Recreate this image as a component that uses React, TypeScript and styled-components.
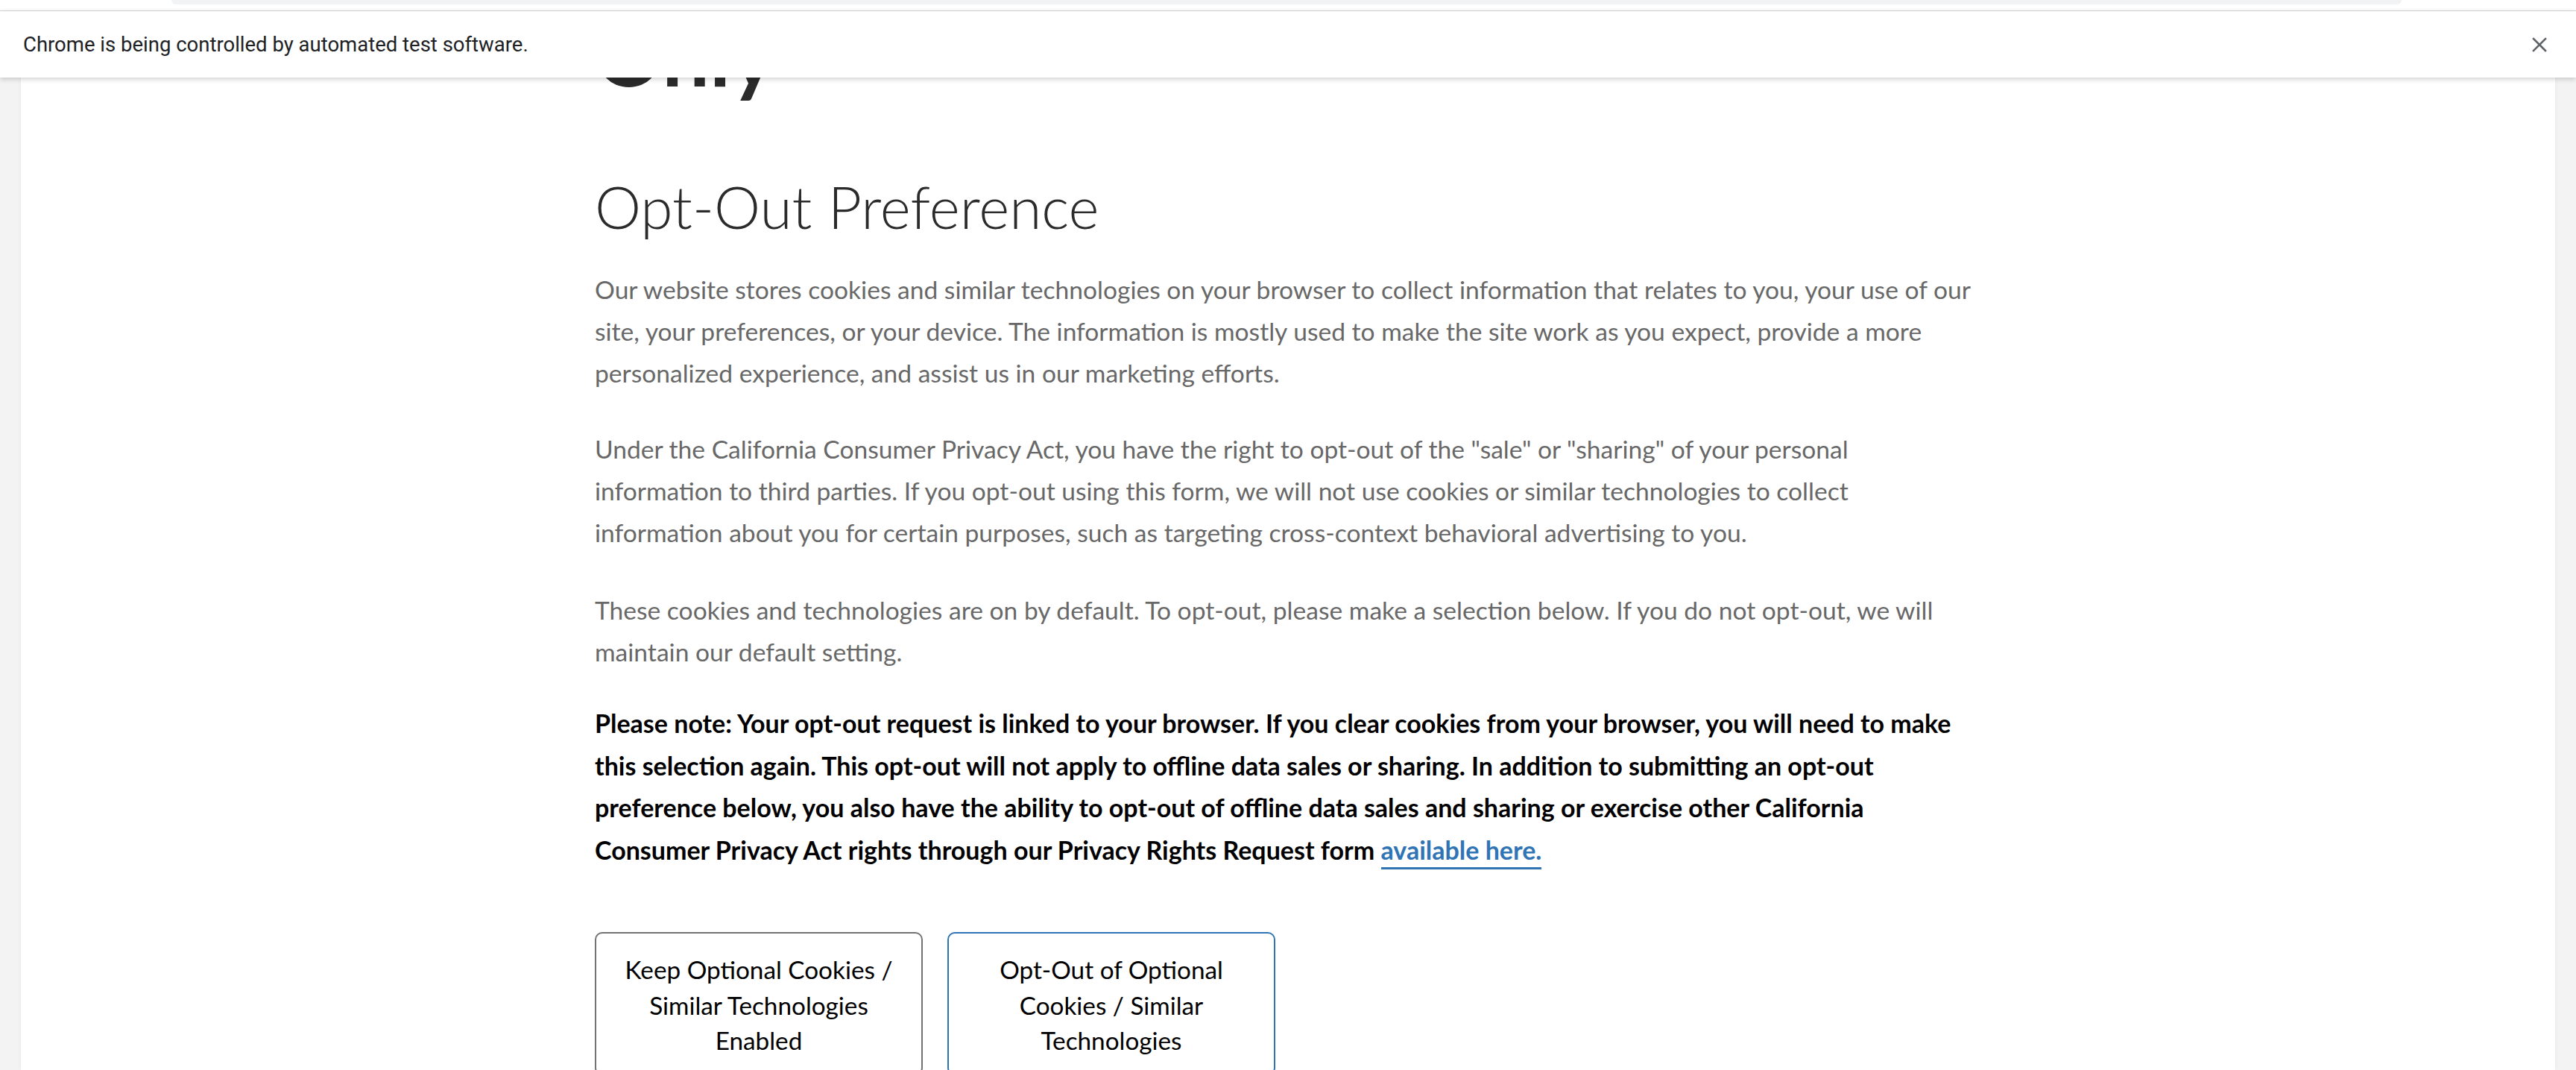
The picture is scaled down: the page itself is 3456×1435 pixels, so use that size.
import React from "react";
import styled, { createGlobalStyle } from "styled-components";

const GlobalStyle = createGlobalStyle`
  html, body {
    margin: 0;
    padding: 0;
    background: #f3f3f3;
    overflow: hidden;
  }
  * { box-sizing: border-box; }
`;

const Window = styled.div`
  width: 3456px;
  height: 1435px;
  display: flex;
  flex-direction: column;
  overflow: hidden;
  background: #f3f3f3;
`;

const ChromeStrip = styled.div`
  height: 15px;
  flex: none;
  background: #ffffff;
  border-bottom: 1px solid #d9d9d9;
  display: flex;
  padding: 0 234px 0 230px;
`;

const Omnibox = styled.div`
  flex: 1;
  height: 6px;
  background: #f1f3f4;
  border-radius: 0 0 14px 14px;
`;

const Infobar = styled.div`
  height: 89px;
  flex: none;
  background: #ffffff;
  display: flex;
  align-items: center;
  justify-content: space-between;
  padding: 0 38px 0 31px;
  position: relative;
  z-index: 2;
  box-shadow: 0 2px 7px rgba(0, 0, 0, 0.2);
  font-family: Roboto, "Liberation Sans", sans-serif;
  font-size: 27.5px;
  color: #202124;
`;

const InfoText = styled.span`
  letter-spacing: 0;
`;

const CloseButton = styled.button`
  border: none;
  background: transparent;
  padding: 0;
  width: 22px;
  height: 22px;
  display: flex;
  align-items: center;
  justify-content: center;
`;

const Viewport = styled.div`
  flex: 1;
  overflow: hidden;
  display: flex;
  padding: 0 28px;
  background: #f3f3f3;
`;

const Panel = styled.main`
  flex: 1;
  background: #ffffff;
  box-shadow: 0 0 6px rgba(0, 0, 0, 0.05);
  display: flex;
  justify-content: center;
`;

const Content = styled.div`
  width: 1860px;
  margin-top: -92px;
  font-family: Lato, "Open Sans", sans-serif;
`;

const PageTitle = styled.h1`
  margin: 0;
  font-size: 113px;
  line-height: 120px;
  font-weight: 700;
  color: #2b2b2b;
`;

const SectionTitle = styled.h2`
  margin: 98px 0 0;
  font-size: 78.5px;
  line-height: 94px;
  font-weight: 300;
  color: #2b2b2b;
`;

const Paragraph = styled.p<{ $top: number }>`
  margin: ${(p) => p.$top}px 0 0;
  font-size: 33.6px;
  line-height: 56px;
  font-weight: 400;
  color: #686868;
`;

const Note = styled.p`
  margin: 40px 0 0;
  font-size: 34px;
  line-height: 56.5px;
  font-weight: 700;
  color: #000000;
`;

const Link = styled.a`
  color: #2f74b5;
  text-decoration: none;
  border-bottom: 3px solid #2f74b5;
  padding-bottom: 3px;
`;

const ButtonRow = styled.div`
  display: flex;
  gap: 33px;
  margin-top: 82px;
`;

const ChoiceButton = styled.button<{ $accent: string }>`
  width: 440px;
  padding: 25px 22px 20px;
  background: #ffffff;
  border: 2px solid ${(p) => p.$accent};
  border-radius: 10px;
  font-family: Lato, "Open Sans", sans-serif;
  font-size: 33.3px;
  line-height: 47.5px;
  color: #000000;
  text-align: center;
`;

const Lines: React.FC<{ lines: string[] }> = ({ lines }) => (
  <>
    {lines.map((l, i) => (
      <React.Fragment key={i}>
        {l}
        {i < lines.length - 1 && <br />}
      </React.Fragment>
    ))}
  </>
);

const p1 = [
  "Our website stores cookies and similar technologies on your browser to collect information that relates to you, your use of our",
  "site, your preferences, or your device. The information is mostly used to make the site work as you expect, provide a more",
  "personalized experience, and assist us in our marketing efforts.",
];

const p2 = [
  "Under the California Consumer Privacy Act, you have the right to opt-out of the \"sale\" or \"sharing\" of your personal",
  "information to third parties. If you opt-out using this form, we will not use cookies or similar technologies to collect",
  "information about you for certain purposes, such as targeting cross-context behavioral advertising to you.",
];

const p3 = [
  "These cookies and technologies are on by default. To opt-out, please make a selection below. If you do not opt-out, we will",
  "maintain our default setting.",
];

const note = [
  "Please note: Your opt-out request is linked to your browser. If you clear cookies from your browser, you will need to make",
  "this selection again. This opt-out will not apply to offline data sales or sharing. In addition to submitting an opt-out",
  "preference below, you also have the ability to opt-out of offline data sales and sharing or exercise other California",
];

export default function App() {
  return (
    <>
      <GlobalStyle />
      <Window>
        <ChromeStrip>
          <Omnibox />
        </ChromeStrip>
        <Infobar>
          <InfoText>Chrome is being controlled by automated test software.</InfoText>
          <CloseButton aria-label="Close">
            <svg width="20" height="20" viewBox="0 0 20 20">
              <path d="M2 2 L18 18 M18 2 L2 18" stroke="#5f6368" strokeWidth="2.6" strokeLinecap="square" />
            </svg>
          </CloseButton>
        </Infobar>
        <Viewport>
          <Panel>
            <Content>
              <PageTitle>Only</PageTitle>
              <SectionTitle>Opt-Out Preference</SectionTitle>
              <Paragraph $top={36}>
                <Lines lines={p1} />
              </Paragraph>
              <Paragraph $top={46}>
                <Lines lines={p2} />
              </Paragraph>
              <Paragraph $top={48}>
                <Lines lines={p3} />
              </Paragraph>
              <Note>
                <Lines lines={note} />
                <br />
                Consumer Privacy Act rights through our Privacy Rights Request form{" "}
                <Link href="#">available here.</Link>
              </Note>
              <ButtonRow>
                <ChoiceButton $accent="#727272">
                  Keep Optional Cookies / Similar Technologies Enabled
                </ChoiceButton>
                <ChoiceButton $accent="#2f74b5">
                  Opt-Out of Optional Cookies / Similar Technologies
                </ChoiceButton>
              </ButtonRow>
            </Content>
          </Panel>
        </Viewport>
      </Window>
    </>
  );
}
